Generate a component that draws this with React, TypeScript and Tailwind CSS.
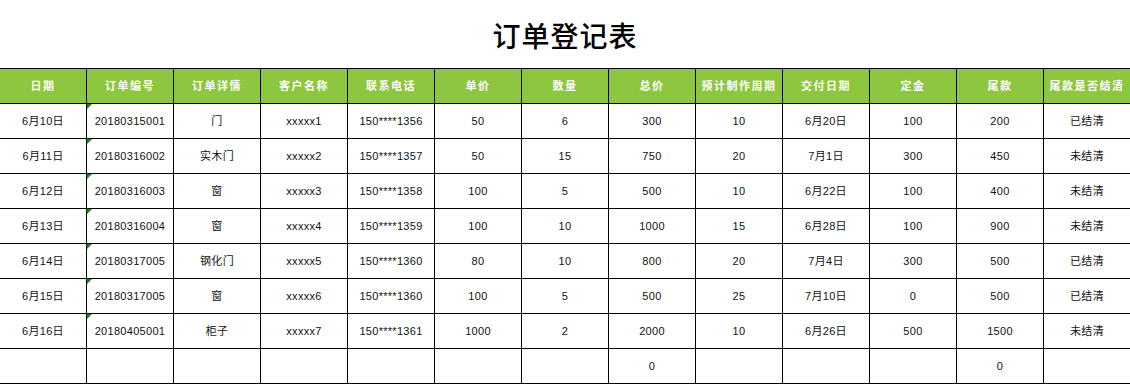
const headers = [
  "日期",
  "订单编号",
  "订单详情",
  "客户名称",
  "联系电话",
  "单价",
  "数量",
  "总价",
  "预计制作周期",
  "交付日期",
  "定金",
  "尾款",
  "尾款是否结清",
];

// one row per order; the last row is the totals line (only 总价 / 尾款 filled)
const rows: string[][] = [
  ["6月10日", "20180315001", "门", "xxxxx1", "150****1356", "50", "6", "300", "10", "6月20日", "100", "200", "已结清"],
  ["6月11日", "20180316002", "实木门", "xxxxx2", "150****1357", "50", "15", "750", "20", "7月1日", "300", "450", "未结清"],
  ["6月12日", "20180316003", "窗", "xxxxx3", "150****1358", "100", "5", "500", "10", "6月22日", "100", "400", "未结清"],
  ["6月13日", "20180316004", "窗", "xxxxx4", "150****1359", "100", "10", "1000", "15", "6月28日", "100", "900", "未结清"],
  ["6月14日", "20180317005", "钢化门", "xxxxx5", "150****1360", "80", "10", "800", "20", "7月4日", "300", "500", "已结清"],
  ["6月15日", "20180317005", "窗", "xxxxx6", "150****1360", "100", "5", "500", "25", "7月10日", "0", "500", "已结清"],
  ["6月16日", "20180405001", "柜子", "xxxxx7", "150****1361", "1000", "2", "2000", "10", "6月26日", "500", "1500", "未结清"],
  ["", "", "", "", "", "", "", "0", "", "", "", "0", ""],
];

const font = { fontFamily: '"Liberation Sans", "Noto Sans CJK SC", sans-serif' };

export default function App() {
  return (
    <div className="h-[385px] w-[1130px] overflow-hidden bg-white" style={font}>
      <div className="flex h-[68px] items-center justify-center pt-[7px]">
        <h1
          className="text-[28px] font-medium tracking-[1px] text-black"
          style={{ fontFamily: '"Liberation Serif", "Noto Sans CJK SC", serif' }}
        >
          订单登记表
        </h1>
      </div>

      <div className="grid grid-cols-[repeat(13,87px)] border-t border-black">
        {headers.map((h) => (
          <div
            key={h}
            className="flex h-[35px] items-center justify-center border-b border-r border-black bg-[#8dc63f] text-[11px] font-bold tracking-[1.5px] text-white"
          >
            {h}
          </div>
        ))}

        {rows.map((r, ri) =>
          r.map((c, ci) => (
            <div
              key={`${ri}-${ci}`}
              className="relative flex h-[35px] items-center justify-center border-b border-r border-black text-[11px] tracking-[0.3px] text-[#111]"
            >
              {ci === 1 && c !== "" && (
                <span className="absolute left-0 top-0 h-0 w-0 border-r-[5px] border-t-[5px] border-r-transparent border-t-[#138a13]" />
              )}
              {c}
            </div>
          ))
        )}
      </div>
    </div>
  );
}
